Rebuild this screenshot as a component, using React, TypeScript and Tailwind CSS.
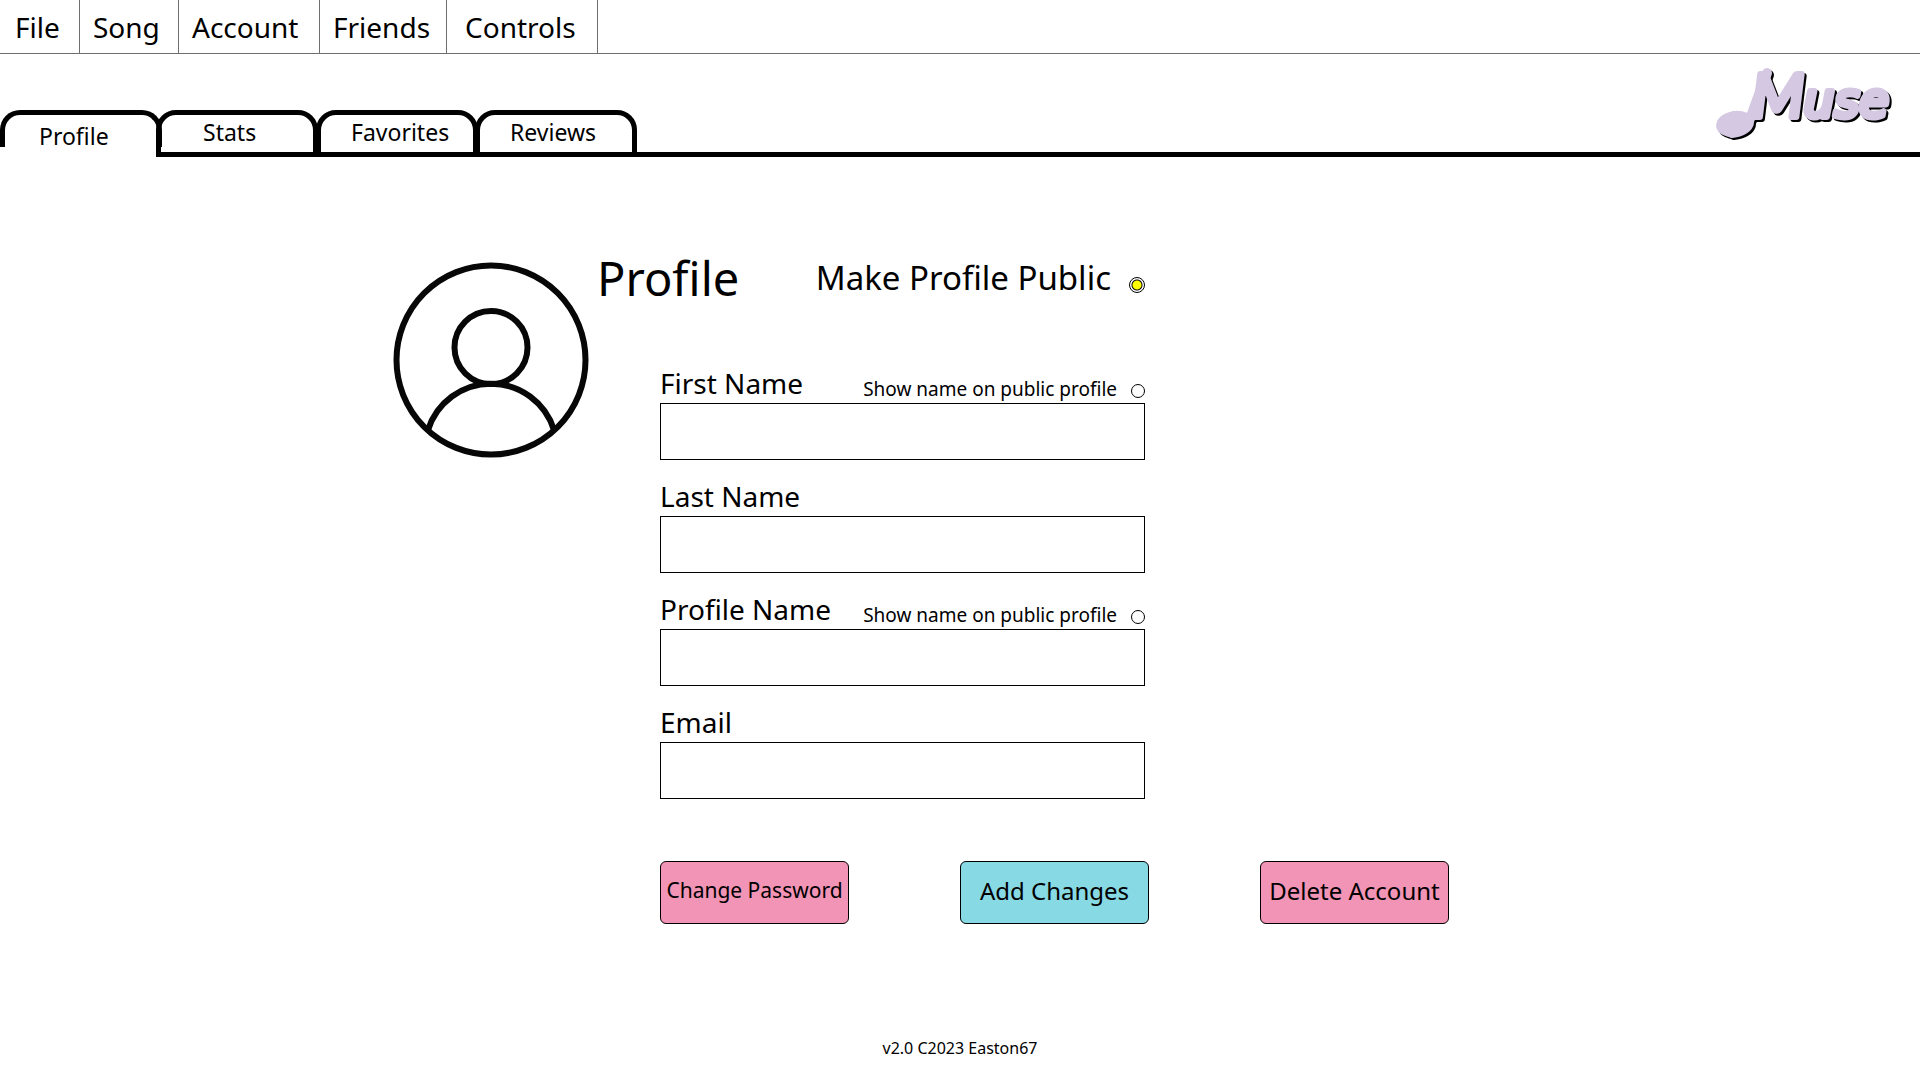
import React, { useState } from "react";

const menu = [
  { label: "File", box: "w-20 pl-[15px]" },
  { label: "Song", box: "w-[99px] pl-[13px]" },
  { label: "Account", box: "w-[141px] pl-[13px]" },
  { label: "Friends", box: "w-[127px] pl-[13px]" },
  { label: "Controls", box: "w-[151px] pl-[18px]" },
];

const tabs = [
  { label: "Stats", box: "-ml-1.5 pl-[42px]" },
  { label: "Favorites", box: "-ml-0.5 pl-[30px]" },
  { label: "Reviews", box: "-ml-[3px] pl-[30px]" },
];

const fields = [
  { id: "first-name", label: "First Name", type: "text", shareable: true },
  { id: "last-name", label: "Last Name", type: "text", shareable: false },
  { id: "profile-name", label: "Profile Name", type: "text", shareable: true },
  { id: "email", label: "Email", type: "email", shareable: false },
];

const actions = [
  { label: "Change Password", look: "bg-[#f294b5] text-[21px]" },
  { label: "Add Changes", look: "bg-[#87d9e4] text-2xl" },
  { label: "Delete Account", look: "bg-[#f294b5] text-2xl" },
];

function Logo() {
  return (
    <svg
      viewBox="0 0 180 80"
      className="h-20 w-[180px] overflow-visible drop-shadow-[2px_2px_0_#000]"
      fill="#d5c8e2"
      stroke="#d5c8e2"
      strokeLinejoin="round"
      strokeLinecap="round"
      role="img"
      aria-label="Muse"
    >
      <ellipse cx="21" cy="62" rx="19" ry="13" transform="rotate(-8 21 62)" stroke="none" />
      <path d="M53 11 L40 46 Q33 70 18 71" fill="none" strokeWidth="10" />
      <path d="M41 40 L34 51 L18 49 L18 75 Q34 75 42 54Z" stroke="none" />
      <text x="38" y="55" fontStyle="italic" strokeWidth="6">
        <tspan fontFamily="Lato, sans-serif" fontSize="60">M</tspan>
        <tspan fontFamily="DejaVu Sans, sans-serif" fontSize="48">use</tspan>
      </text>
    </svg>
  );
}

function Avatar() {
  return (
    <svg viewBox="0 0 196 196" className="mt-[7px] size-[196px] shrink-0" fill="none" stroke="#070707" strokeWidth="6" role="img" aria-label="Profile picture">
      <circle cx="98" cy="98" r="94.5" />
      <circle cx="98" cy="85.5" r="36.5" />
      <path d="M35 168 A66 66 0 0 1 161 168" />
    </svg>
  );
}

export default function App() {
  const [isPublic, setIsPublic] = useState(true);
  return (
    <div className="min-h-screen bg-white font-['Noto_Sans',sans-serif] text-black">
      <nav className="flex h-[54px] border-b border-[#6e6e6e]">
        {menu.map((m) => (
          <button key={m.label} type="button" className={`border-r border-[#6e6e6e] text-left text-[28px] ${m.box}`}>
            {m.label}
          </button>
        ))}
      </nav>

      <header className="flex h-[103px] items-end">
        <div className="flex h-[47px] text-[23px]">
          <button type="button" className="h-[37px] w-[162px] rounded-t-[20px] border-[5px] border-b-0 border-black pl-[34px] text-left leading-[42px]">
            Profile
          </button>
          {tabs.map((t) => (
            <button key={t.label} type="button" className={`w-[162px] rounded-t-[20px] border-[5px] border-black pb-1 text-left leading-[30px] ${t.box}`}>
              {t.label}
            </button>
          ))}
        </div>
        <div className="flex h-full grow justify-end border-b-[5px] border-black pt-2 pr-[26px]">
          <Logo />
        </div>
      </header>

      <main className="mx-auto mt-[98px] flex max-w-[1134px] gap-2">
        <Avatar />
        <div>
          <div className="flex h-[92px] w-[548px] justify-between">
            <h1 className="text-[47px] leading-[46px]">Profile</h1>
            <label className="flex h-[46px] items-center gap-[18px] text-[33px]">
              Make Profile Public
              <input
                type="radio"
                checked={isPublic}
                onClick={() => setIsPublic(!isPublic)}
                readOnly
                className="mt-3.5 size-4 appearance-none rounded-full border border-black checked:bg-[radial-gradient(circle,#ff0_4px,#000_5px,#fff_6px)]"
              />
            </label>
          </div>

          <form className="ml-[63px]">
            <div className="flex w-[485px] flex-col">
              {fields.map((f) => (
                <div key={f.id}>
                  <div className="flex h-14 items-end justify-between pb-0.5">
                    <label htmlFor={f.id} className="text-[28px] leading-9">
                      {f.label}
                    </label>
                    {f.shareable && (
                      <label className="flex items-center gap-3.5 text-[19px] leading-6">
                        Show name on public profile
                        <input
                          type="radio"
                          name={`${f.id}-visibility`}
                          className="mt-1 size-3.5 appearance-none rounded-full border border-black checked:bg-[#ffff00]"
                        />
                      </label>
                    )}
                  </div>
                  <input id={f.id} type={f.type} className="block h-[57px] w-full border border-black px-3 text-2xl" />
                </div>
              ))}
            </div>

            <div className="mt-[62px] flex gap-[111px]">
              {actions.map((a) => (
                <button key={a.label} type="button" className={`h-[63px] w-[189px] shrink-0 rounded-md border border-black pb-1 whitespace-nowrap ${a.look}`}>
                  {a.label}
                </button>
              ))}
            </div>
          </form>
        </div>
      </main>

      <footer className="mt-28 text-center text-base">v2.0 C2023 Easton67</footer>
    </div>
  );
}
